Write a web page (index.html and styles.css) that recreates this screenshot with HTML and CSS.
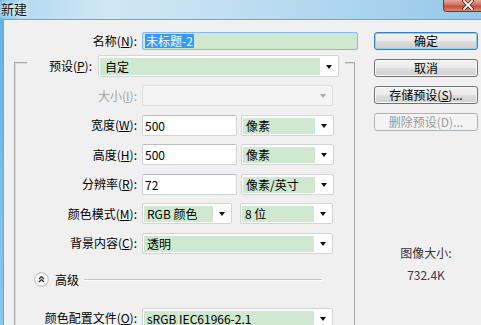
FILE: index.html
```html
<!DOCTYPE html>
<html lang="zh">
<head>
<meta charset="utf-8">
<title>新建</title>
<link rel="stylesheet" href="styles.css">
</head>
<body>
<div class="win">
  <div class="titlebar">
    <span class="title">新建</span>
    <div class="close">
      <svg width="14" height="10" viewBox="0 0 14 10"><path d="M3 1 L11 9 M11 1 L3 9" stroke="#4a1a14" stroke-width="3.4" stroke-linecap="square"/><path d="M3 1 L11 9 M11 1 L3 9" stroke="#fff" stroke-width="1.8" stroke-linecap="square"/></svg>
    </div>
  </div>
  <div class="frame">
    <div class="dialog">
      <div class="main">
        <div class="row name-row">
          <span class="lbl lbl-name">名称(<u>N</u>):</span>
          <div class="input focus"><span class="sel">未标题-2</span></div>
        </div>
        <div class="group">
          <div class="group-head">
            <span class="lbl lbl-preset">预设(<u>P</u>):</span>
            <div class="combo w-preset"><span class="fill">自定</span><span class="arrow"><i class="tri"></i></span></div>
          </div>
          <div class="row r-size">
            <span class="lbl disabled">大小(<u>I</u>):</span>
            <div class="combo w-full off"><span class="fill"></span><span class="arrow"><i class="tri"></i></span></div>
          </div>
          <div class="row">
            <span class="lbl">宽度(<u>W</u>):</span>
            <div class="input w-num">500</div>
            <div class="combo w-unit"><span class="fill">像素</span><span class="arrow"><i class="tri"></i></span></div>
          </div>
          <div class="row">
            <span class="lbl">高度(<u>H</u>):</span>
            <div class="input w-num">500</div>
            <div class="combo w-unit"><span class="fill">像素</span><span class="arrow"><i class="tri"></i></span></div>
          </div>
          <div class="row">
            <span class="lbl">分辨率(<u>R</u>):</span>
            <div class="input w-num">72</div>
            <div class="combo w-unit"><span class="fill">像素/英寸</span><span class="arrow"><i class="tri"></i></span></div>
          </div>
          <div class="row">
            <span class="lbl">颜色模式(<u>M</u>):</span>
            <div class="combo w-mode"><span class="fill">RGB 颜色</span><span class="arrow"><i class="tri"></i></span></div>
            <div class="combo w-unit"><span class="fill">8 位</span><span class="arrow"><i class="tri"></i></span></div>
          </div>
          <div class="row">
            <span class="lbl">背景内容(<u>C</u>):</span>
            <div class="combo w-full"><span class="fill">透明</span><span class="arrow"><i class="tri"></i></span></div>
          </div>
          <div class="adv">
            <span class="adv-icon">
              <svg width="15" height="15" viewBox="0 0 15 15"><circle cx="7.5" cy="7.5" r="6.8" fill="#fbfbfb" stroke="#b9b9b9"/><path d="M5 7 L7.5 4.6 L10 7 M5 10 L7.5 7.6 L10 10" fill="none" stroke="#2a2a2a" stroke-width="1.3"/></svg>
            </span>
            <span class="adv-text">高级</span>
            <span class="adv-line"></span>
          </div>
          <div class="row r-profile">
            <span class="lbl">颜色配置文件(<u>O</u>):</span>
            <div class="combo w-full"><span class="fill">sRGB IEC61966-2.1</span><span class="arrow"><i class="tri"></i></span></div>
          </div>
        </div>
      </div>
      <div class="side">
        <div class="btn default">确定</div>
        <div class="btn">取消</div>
        <div class="btn">存储预设(<u>S</u>)...</div>
        <div class="btn disabled-btn">删除预设(D)...</div>
        <div class="info">
          <div class="info-l">图像大小:</div>
          <div class="info-v">732.4K</div>
        </div>
      </div>
    </div>
  </div>
</div>
</body>
</html>
```
FILE: styles.css
```css
* { box-sizing: border-box; }
body {
  margin: 0;
  background: #f0f0f0;
  font-family: "Noto Sans CJK SC", "Microsoft YaHei", sans-serif;
  font-size: 12px;
  color: #000;
}
.win {
  width: 481px;
  height: 325px;
  overflow: hidden;
  display: flex;
  flex-direction: column;
}
.titlebar {
  height: 19px;
  flex: none;
  display: flex;
  justify-content: space-between;
  align-items: flex-start;
  background: linear-gradient(90deg, #74bce5 0%, #b4daf0 5%, #d0e7f4 22%, #c3e0f1 45%, #aed6ee 70%, #94c8e9 100%);
}
.title {
  font-size: 13px;
  line-height: 17px;
  padding-left: 1px;
  color: #111;
  text-shadow: 0 0 4px #fff, 0 0 6px #fff;
}
.close {
  width: 46px;
  height: 12px;
  margin-right: -8px;
  border: 1px solid #6b3530;
  border-top: none;
  border-radius: 0 0 4px 4px;
  background: linear-gradient(#e8a69c 0%, #d2705f 45%, #c24a36 55%, #d98a72 100%);
  display: flex;
  justify-content: flex-start;
  padding-left: 17px;
}
.frame {
  flex: 1;
  display: flex;
  padding-left: 3px;
  background: linear-gradient(#62b3e2, #8ccbee);
}
.dialog {
  flex: 1;
  display: flex;
  background: #f0f0f0;
  border-left: 1px solid #8c9fb0;
  border-top: 1px solid #8c9fb0;
}
.main {
  width: 370px;
  flex: none;
}
.row {
  display: flex;
  align-items: center;
  height: 21px;
  margin-top: 8.5px;
}
.lbl {
  width: 122px;
  flex: none;
  text-align: right;
  margin-right: 5px;
  line-height: 16px;
  white-space: nowrap;
}
.lbl u { text-underline-offset: 1px; }
.disabled { color: #a3a3a3; }
.name-row {
  margin-top: 12px;
  height: 18px;
}
.lbl-name { width: 133px; }
.input {
  height: 21px;
  border: 1px solid #cfd2d6;
  border-top-color: #b9bcc1;
  border-radius: 2px;
  background: #fff;
  padding: 0 2px;
  line-height: 19px;
  white-space: nowrap;
}
.input.focus {
  width: 216px;
  height: 18px;
  border-color: #87b7e6;
  background: #cfe8cf;
  padding: 1px 2px;
  line-height: 14px;
}
.sel {
  display: inline-block;
  background: #3399ff;
  color: #fff;
  line-height: 14px;
  padding: 0 1px;
}
.w-num { width: 95px; margin-right: 4px; }
.group {
  margin: 12px 0 0 10px;
  width: 341px;
  height: 300px;
  border: 1px solid #a9a9a9;
  box-shadow: inset 1px 1px 0 #dedede;
}
.group-head {
  display: flex;
  align-items: center;
  margin: -8px 0 0 12px;
  width: 318px;
  height: 22px;
  background: #f0f0f0;
}
.lbl-preset { width: 65px; margin-right: 6px; }
.combo {
  display: flex;
  height: 21px;
  border: 1px solid #d2d4d8;
  border-radius: 2px;
  background: #fff;
  padding: 2px 0 1px 1px;
}
.combo .fill {
  flex: 1;
  background: #cfe8cf;
  line-height: 16px;
  padding-left: 3px;
  white-space: nowrap;
  overflow: hidden;
}
.combo .arrow {
  width: 18px;
  flex: none;
  display: flex;
  align-items: center;
  justify-content: center;
}
.tri {
  display: block;
  width: 0;
  height: 0;
  border-left: 3.5px solid transparent;
  border-right: 3.5px solid transparent;
  border-top: 4px solid #111;
}
.w-preset { width: 241px; height: 22px; }
.w-preset .fill { line-height: 17px; padding-left: 5px; }
.w-full { width: 191px; }
.w-unit { width: 93px; }
.w-mode { width: 90px; margin-right: 8px; }
.off { background: #f4f4f4; border-color: #dcdcdc; }
.off .fill { background: #f4f4f4; }
.off .tri { border-top-color: #a8a8a8; }
.r-size { margin-top: 8px; }
.adv {
  display: flex;
  align-items: center;
  height: 20px;
  margin-top: 16px;
  padding-left: 19px;
}
.adv-icon { width: 15px; height: 15px; display: block; flex: none; }
.adv-icon svg { display: block; }
.adv-text { margin-left: 6px; line-height: 16px; }
.adv-line {
  margin-left: 5px;
  width: 238px;
  height: 2px;
  border-top: 1px solid #c6c6c6;
  border-bottom: 1px solid #fcfcfc;
}
.r-profile { margin-top: 18px; }
.side {
  width: 104px;
  flex: none;
  display: flex;
  flex-direction: column;
  gap: 9px;
  padding-top: 12px;
}
.btn {
  height: 18px;
  border: 1px solid #707070;
  border-radius: 3px;
  background: linear-gradient(#f3f3f3 0%, #ebebeb 48%, #dddddd 52%, #d0d0d0 100%);
  box-shadow: inset 0 0 0 1px #fafafa;
  text-align: center;
  line-height: 16px;
  white-space: nowrap;
}
.btn.default {
  border-color: #3c7fb1;
  box-shadow: inset 0 0 0 1px #8fd0f2;
}
.btn.disabled-btn {
  border-color: #adb2b5;
  background: #f4f4f4;
  box-shadow: none;
  color: #9a9a9a;
}
.info {
  margin-top: 105px;
  text-align: center;
  color: #333;
}
.info-l { line-height: 16px; }
.info-v { line-height: 16px; margin-top: 6px; color: #3a3a4a; }
```
